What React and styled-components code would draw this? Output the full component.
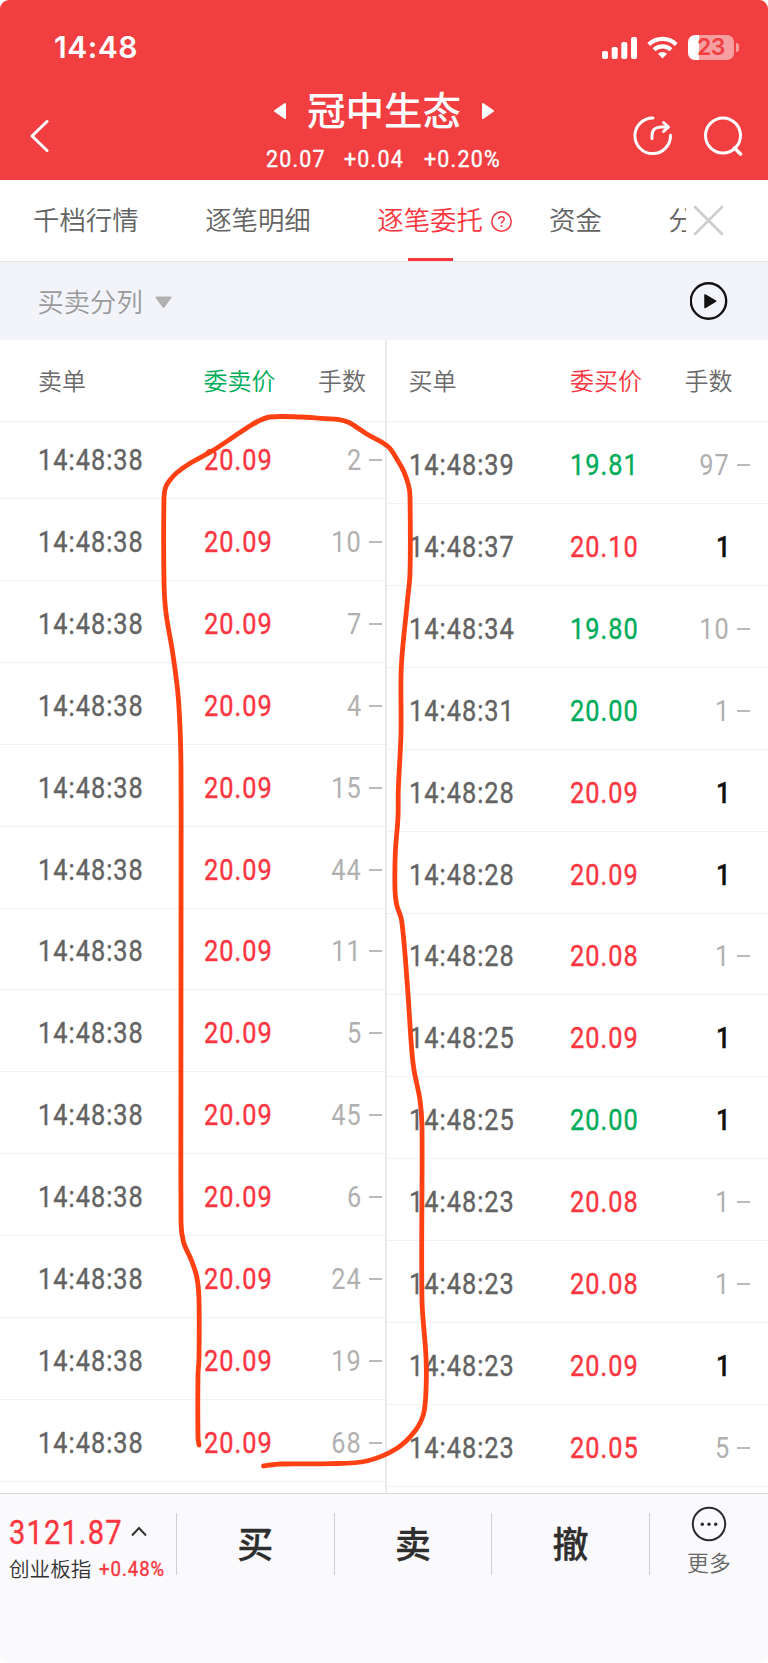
import React from "react";
import styled, { createGlobalStyle } from "styled-components";

const RED = "#fb3640";
const GREEN = "#00ac59";
const GREY = "#636363";

const sellOrders = [2, 10, 7, 4, 15, 44, 11, 5, 45, 6, 24, 19, 68].map((count) => ({
  time: "14:48:38",
  price: "20.09",
  color: RED,
  count,
  pulled: true,
}));

const buyOrders = [
  { time: "14:48:39", price: "19.81", color: GREEN, count: 97, pulled: true },
  { time: "14:48:37", price: "20.10", color: RED, count: 1 },
  { time: "14:48:34", price: "19.80", color: GREEN, count: 10, pulled: true },
  { time: "14:48:31", price: "20.00", color: GREEN, count: 1, pulled: true },
  { time: "14:48:28", price: "20.09", color: RED, count: 1 },
  { time: "14:48:28", price: "20.09", color: RED, count: 1 },
  { time: "14:48:28", price: "20.08", color: RED, count: 1, pulled: true },
  { time: "14:48:25", price: "20.09", color: RED, count: 1 },
  { time: "14:48:25", price: "20.00", color: GREEN, count: 1 },
  { time: "14:48:23", price: "20.08", color: RED, count: 1, pulled: true },
  { time: "14:48:23", price: "20.08", color: RED, count: 1, pulled: true },
  { time: "14:48:23", price: "20.09", color: RED, count: 1 },
  { time: "14:48:23", price: "20.05", color: RED, count: 5, pulled: true },
];

// Hand drawn marker line, from the lower left end round to the lower right
const markerPoints = [
  [199, 1445], [198, 1438], [198, 1375], [199, 1358], [199, 1300], [197, 1278],
  [191.7, 1261], [183.5, 1242], [181, 1222], [181, 770], [178.5, 700],
  [172.7, 653], [166, 613], [164, 582], [164, 497], [165.7, 487], [170, 480],
  [177, 472.5], [191.7, 462.3], [213, 450.5], [240, 432.5], [256.7, 422],
  [270, 417], [300, 417], [325, 418.7], [338, 419.3], [349, 422.5], [366.7, 434],
  [388, 446.5], [398, 461], [404, 472], [408.7, 486], [410, 497], [410, 573],
  [407.3, 602], [401.3, 667], [401, 733], [398.3, 790], [398, 817],
  [395.3, 853], [395, 890], [396.5, 904], [401.7, 921], [407.7, 990],
  [411.5, 1047], [414, 1070], [420, 1100], [422, 1127], [422, 1300],
  [426, 1357], [426, 1390], [423.5, 1414], [415, 1431], [396.7, 1448.5],
  [366.7, 1461], [330, 1463.7], [280, 1464], [263.5, 1466],
];

const smoothPath = (points) => {
  let d = `M${points[0].join(" ")}`;
  for (let i = 0; i < points.length - 1; i++) {
    const p0 = points[i - 1] || points[i];
    const p1 = points[i];
    const p2 = points[i + 1];
    const p3 = points[i + 2] || p2;
    const len = Math.hypot(p2[0] - p1[0], p2[1] - p1[1]);
    const t1 = len / (3 * Math.hypot(p2[0] - p0[0], p2[1] - p0[1]));
    const t2 = len / (3 * Math.hypot(p3[0] - p1[0], p3[1] - p1[1]));
    const c1 = [p1[0] + (p2[0] - p0[0]) * t1, p1[1] + (p2[1] - p0[1]) * t1];
    const c2 = [p2[0] - (p3[0] - p1[0]) * t2, p2[1] - (p3[1] - p1[1]) * t2];
    d += `C${c1.join(" ")} ${c2.join(" ")} ${p2.join(" ")}`;
  }
  return d;
};

const GlobalStyle = createGlobalStyle`
  * {
    box-sizing: border-box;
  }

  body {
    margin: 0;
    background: white;
    font-family: "Noto Sans CJK SC", sans-serif;
  }

  svg {
    display: block;
    flex: none;
  }
`;

const Screen = styled.div`
  position: relative;
  display: flex;
  flex-direction: column;
  width: 768px;
  height: 1663px;
  border-radius: 9px;
  overflow: hidden;
  background: white;
`;

const Header = styled.header`
  height: 180px;
  flex: none;
  background: #f03e41;
  color: white;
`;

const StatusBar = styled.div`
  display: flex;
  align-items: center;
  height: 88px;
  padding: 7px 29px 0 54px;
`;

const Clock = styled.div`
  flex: 1;
  font-family: Inter, sans-serif;
  font-size: 30px;
  font-weight: 600;
  line-height: 34px;
  height: 36px;
  letter-spacing: 0.5px;
`;

const StatusIcons = styled.div`
  display: flex;
  align-items: center;
  gap: 10px;
`;

const Battery = styled.div`
  display: flex;
  align-items: center;
  gap: 2px;
`;

const BatteryBody = styled.div`
  width: 46px;
  height: 25px;
  border-radius: 7px;
  background: linear-gradient(90deg, white 11px, #f79fa0 11px);
  color: #f03e41;
  font: 600 23px/25px Inter, sans-serif;
  letter-spacing: -0.5px;
  text-align: center;
`;

const BatteryCap = styled.div`
  width: 3px;
  height: 9px;
  border-radius: 0 4px 4px 0;
  background: #f79fa0;
`;

const NavBar = styled.nav`
  display: grid;
  grid-template-columns: 150px 1fr 150px;
  height: 92px;
`;

const NavSide = styled.div`
  display: flex;
  align-items: center;
  justify-content: ${(props) => (props.$end ? "flex-end" : "flex-start")};
  gap: 30px;
  height: 96px;
  padding: 0 25px 0 29px;
`;

const Title = styled.div`
  display: flex;
  align-items: center;
  justify-content: center;
  gap: 20px;
  height: 46px;
  font-size: 38.5px;
  font-weight: 500;
  line-height: 40px;

  span {
    height: 46px;
  }
`;

// Narrow figures, squeezed from the left or the right edge
const Figures = styled.span`
  display: inline-block;
  transform: scaleX(0.88);
  transform-origin: ${(props) => (props.$right ? "right" : "left")} center;
  -webkit-text-stroke: ${(props) => (props.$thin ? 0 : 0.4)}px currentColor;
`;

const Quote = styled.div`
  display: grid;
  grid-template-columns: 78px 80px 90px;
  height: 28px;
  margin-top: 11px;
  padding-left: 116px;
  font: 400 24.3px/28px Roboto, sans-serif;
  letter-spacing: 1.4px;
`;

const TabBar = styled.div`
  display: flex;
  align-items: center;
  height: 82px;
  flex: none;
  border-bottom: 1px solid #e9e3e4;
`;

const TabList = styled.div`
  display: flex;
  gap: 66.6px;
  width: 686px;
  height: 81px;
  margin-right: 7px;
  padding-left: 33px;
  overflow: hidden;
`;

const Tab = styled.div`
  position: relative;
  flex: none;
  color: ${(props) => (props.$active ? RED : GREY)};
  font-size: 26.4px;
  font-weight: 350;
  line-height: 77px;
  white-space: nowrap;

  &::after {
    content: "";
    display: ${(props) => (props.$active ? "block" : "none")};
    position: absolute;
    left: 50%;
    bottom: 0;
    width: 45px;
    height: 3px;
    margin-left: -22.5px;
    background: ${RED};
  }
`;

const TabHelp = styled.div`
  display: flex;
  align-items: center;
  margin: 1px -30px 0 -58px;
`;

const FilterBar = styled.div`
  display: flex;
  align-items: center;
  justify-content: space-between;
  height: 78px;
  flex: none;
  padding: 0 40px 0 37.5px;
  background: #f3f4f9;
`;

const Filter = styled.div`
  display: flex;
  align-items: center;
  gap: 12.5px;
  color: #9a9a9a;
  font-size: 26.3px;
  font-weight: 350;
  line-height: 74px;

  svg {
    margin-top: 3px;
  }
`;

const Book = styled.main`
  display: flex;
  flex: 1;
  min-height: 0;
`;

const Pane = styled.section`
  width: ${(props) => props.$width}px;
  overflow: hidden;

  & + & {
    border-left: 2px solid #ebebed;
  }
`;

const PaneRow = styled.div`
  display: grid;
  grid-template-columns: ${(props) => (props.$buy ? "161.5px 1fr auto" : "165.5px 1fr auto")};
  align-items: center;
  padding-left: ${(props) => (props.$buy ? 21.5 : 38)}px;
  border-bottom: 1px solid #f2f2f2;
`;

const PaneHead = styled(PaneRow)`
  position: relative;
  height: 82px;
  padding-right: ${(props) => (props.$buy ? 35.5 : 19)}px;
  background: white;
  color: #6a6a6a;
  font-size: 24px;
  font-weight: 350;
  line-height: 80px;

  div {
    height: 81px;
  }
`;

const HeadPrice = styled.div`
  color: ${(props) => props.$color};
`;

const OrderList = styled.div`
  margin-top: ${(props) => props.$scroll || 0}px;
`;

const OrderRow = styled(PaneRow)`
  height: 81.93px;
  padding-top: 5px;
  padding-right: ${(props) => (props.$buy ? 18.5 : 3.5)}px;
  font: 400 28.8px/34px Roboto, sans-serif;
  letter-spacing: 1.15px;
`;

const Time = styled.div`
  color: ${GREY};
`;

const Price = styled.div`
  color: ${(props) => props.$color};
`;

const Count = styled.div`
  display: flex;
  align-items: center;
  color: ${(props) => (props.$pulled ? "#b0b0b0" : "#111")};
  font-weight: ${(props) => (props.$pulled ? 400 : 500)};
`;

const Dash = styled.span`
  width: 13px;
  height: 2px;
  margin-left: ${(props) => (props.$pulled ? 6.5 : 5)}px;
  background: ${(props) => (props.$pulled ? "#bababa" : "transparent")};
`;

const Footer = styled.footer`
  display: flex;
  height: 170px;
  flex: none;
  padding-top: 19px;
  border-top: 1px solid #d8d9dc;
  background: #fafafc;
`;

const IndexQuote = styled.div`
  width: 176px;
  padding-left: 9px;
`;

const IndexValue = styled.div`
  display: grid;
  grid-template-columns: 121.5px auto;
  justify-content: start;
  align-items: center;
  height: 39px;
  color: ${RED};
  font: 400 33px/39px Roboto, sans-serif;
  letter-spacing: 1.3px;

  svg {
    margin-bottom: 2px;
  }
`;

const IndexChange = styled.div`
  display: flex;
  gap: 8px;
  height: 37px;
  color: #333;
  font-size: 20.6px;
  font-weight: 350;
  line-height: 33px;
  white-space: nowrap;
`;

const IndexPercent = styled(Figures)`
  color: ${RED};
  font: 400 21px/34px Roboto, sans-serif;
  letter-spacing: 1.15px;
`;

const TradeButton = styled.div`
  width: 157.6px;
  height: 62px;
  border-left: 1px solid #d0d0d2;
  color: #2e2e2e;
  font-size: 36px;
  font-weight: 500;
  line-height: 58px;
  text-align: center;
  -webkit-text-stroke: 0.3px #2e2e2e;
`;

const More = styled.div`
  display: flex;
  flex: 1;
  flex-direction: column;
  align-items: center;
  height: 62px;
  border-left: 1px solid #d0d0d2;
  color: #666;
  font-size: 21.8px;
  font-weight: 350;
  line-height: 40px;

  svg {
    margin-top: -7px;
  }
`;

const Marker = styled.svg`
  position: absolute;
  top: 0;
  left: 0;
  pointer-events: none;
`;

const Arrow = ({ flip }) => (
  <svg width="14" height="18" viewBox="0 0 14 18" transform={flip ? "scale(-1 1)" : undefined}>
    <path d="M12 2v14L2 9z" fill="white" stroke="white" strokeWidth="2" strokeLinejoin="round" />
  </svg>
);

const Signal = () => (
  <svg width="35" height="22" viewBox="0 0 35 22" fill="white">
    <rect x="0" y="14" width="6" height="8" rx="2" />
    <rect x="9.7" y="10" width="6" height="12" rx="2" />
    <rect x="19.3" y="5" width="6" height="17" rx="2" />
    <rect x="29" y="0" width="6" height="22" rx="2" />
  </svg>
);

const Wifi = () => (
  <svg width="31" height="23" viewBox="0 0 31 23" fill="none" stroke="white" strokeWidth="4.2">
    <path d="M1.8 8.4a19.8 19.8 0 0 1 27.4 0" />
    <path d="M7 13.8a12.4 12.4 0 0 1 17 0" />
    <path d="M15.5 22.5l-4.6-4.7a6.6 6.6 0 0 1 9.2 0z" fill="white" stroke="none" />
  </svg>
);

const Share = () => (
  <svg width="40" height="40" viewBox="0 0 40 40" fill="none" stroke="white" strokeWidth="3" strokeLinecap="round" strokeLinejoin="round">
    <path d="M20 2A17.8 17.8 0 1 0 37.5 19.3" />
    <path d="M19 22.5v-3c0-5.5 3.5-8.5 9-8.5h6.5" />
    <path d="M30.5 6.5l5 4.5-5 4.5" />
  </svg>
);

const Search = () => (
  <svg width="40" height="40" viewBox="0 0 40 40" fill="none" stroke="white" strokeWidth="3">
    <circle cx="20" cy="19.5" r="17.5" />
    <path d="M31.5 32l6 6" strokeWidth="3.6" strokeLinecap="round" />
  </svg>
);

const Orders = ({ rows, buy, scroll }) => (
  <OrderList $scroll={scroll}>
    {rows.map((row, i) => (
      <OrderRow key={i} $buy={buy}>
        <Time>
          <Figures>{row.time}</Figures>
        </Time>
        <Price $color={row.color}>
          <Figures>{row.price}</Figures>
        </Price>
        <Count $pulled={row.pulled}>
          <Figures $right $thin={row.pulled}>{row.count}</Figures>
          <Dash $pulled={row.pulled} />
        </Count>
      </OrderRow>
    ))}
  </OrderList>
);

export default function App() {
  return (
    <>
      <GlobalStyle />
      <Screen>
        <Header>
          <StatusBar>
            <Clock>14:48</Clock>
            <StatusIcons>
              <Signal />
              <Wifi />
              <Battery>
                <BatteryBody>23</BatteryBody>
                <BatteryCap />
              </Battery>
            </StatusIcons>
          </StatusBar>
          <NavBar>
            <NavSide>
              <svg width="20" height="34" viewBox="0 0 20 34" fill="none" stroke="white" strokeWidth="3" strokeLinecap="round" strokeLinejoin="round">
                <path d="M18 2.5L3 17l15 14.5" />
              </svg>
            </NavSide>
            <div>
              <Title>
                <Arrow />
                <span>冠中生态</span>
                <Arrow flip />
              </Title>
              <Quote>
                <Figures>20.07</Figures>
                <Figures>+0.04</Figures>
                <Figures>+0.20%</Figures>
              </Quote>
            </div>
            <NavSide $end>
              <Share />
              <Search />
            </NavSide>
          </NavBar>
        </Header>

        <TabBar>
          <TabList>
            <Tab>千档行情</Tab>
            <Tab>逐笔明细</Tab>
            <Tab $active>逐笔委托</Tab>
            <TabHelp>
              <svg width="21" height="21" viewBox="0 0 21 21" fill="none" stroke={RED} strokeWidth="1.5">
                <circle cx="10.5" cy="10.5" r="9.7" />
                <path d="M7.8 8.5c0-3.8 5.6-3.6 5.4-.2-.1 1.9-2.7 2-2.7 4.3" />
                <circle cx="10.5" cy="15" r="1" fill={RED} stroke="none" />
              </svg>
            </TabHelp>
            <Tab>资金</Tab>
            <Tab>分时</Tab>
          </TabList>
          <svg width="31" height="31" viewBox="0 0 31 31" stroke="#ccc" strokeWidth="2.5" strokeLinecap="round">
            <path d="M2 2l27 27M29 2L2 29" />
          </svg>
        </TabBar>

        <FilterBar>
          <Filter>
            买卖分列
            <svg width="17" height="13" viewBox="0 0 17 13">
              <path d="M1.5 1.5h14L8.5 11z" fill="#b0b0b0" stroke="#b0b0b0" strokeWidth="2" strokeLinejoin="round" />
            </svg>
          </Filter>
          <svg width="38" height="38" viewBox="0 0 38 38">
            <circle cx="18.5" cy="19" r="17.7" fill="none" stroke="#111" strokeWidth="2.4" />
            <path d="M15 13v12.5l10.7-6.3z" fill="#111" stroke="#111" strokeWidth="1.5" strokeLinejoin="round" />
          </svg>
        </FilterBar>

        <Book>
          <Pane $width={385}>
            <PaneHead>
              <div>卖单</div>
              <HeadPrice $color={GREEN}>委卖价</HeadPrice>
              <div>手数</div>
            </PaneHead>
            <Orders rows={sellOrders} scroll={-5} />
          </Pane>
          <Pane $width={383}>
            <PaneHead $buy>
              <div>买单</div>
              <HeadPrice $color={RED}>委买价</HeadPrice>
              <div>手数</div>
            </PaneHead>
            <Orders rows={buyOrders} buy />
          </Pane>
        </Book>

        <Footer>
          <IndexQuote>
            <IndexValue>
              <Figures>3121.87</Figures>
              <svg width="16" height="11" viewBox="0 0 16 11" fill="none" stroke="#333" strokeWidth="2">
                <path d="M1 9.5L8 2l7 7.5" />
              </svg>
            </IndexValue>
            <IndexChange>
              创业板指
              <IndexPercent>+0.48%</IndexPercent>
            </IndexChange>
          </IndexQuote>
          <TradeButton>买</TradeButton>
          <TradeButton>卖</TradeButton>
          <TradeButton>撤</TradeButton>
          <More>
            <svg width="36" height="36" viewBox="0 0 36 36">
              <circle cx="18" cy="18" r="16.2" fill="none" stroke="#2b2b2f" strokeWidth="2" />
              <circle cx="11.3" cy="18.2" r="1.7" fill="#2b2b2f" />
              <circle cx="18" cy="18.2" r="1.7" fill="#2b2b2f" />
              <circle cx="24.7" cy="18.2" r="1.7" fill="#2b2b2f" />
            </svg>
            更多
          </More>
        </Footer>

        <Marker width="768" height="1663" viewBox="0 0 768 1663">
          <path d={smoothPath(markerPoints)} fill="none" stroke="#ff4013" strokeWidth="4.8" strokeLinecap="round" strokeLinejoin="round" />
        </Marker>
      </Screen>
    </>
  );
}
